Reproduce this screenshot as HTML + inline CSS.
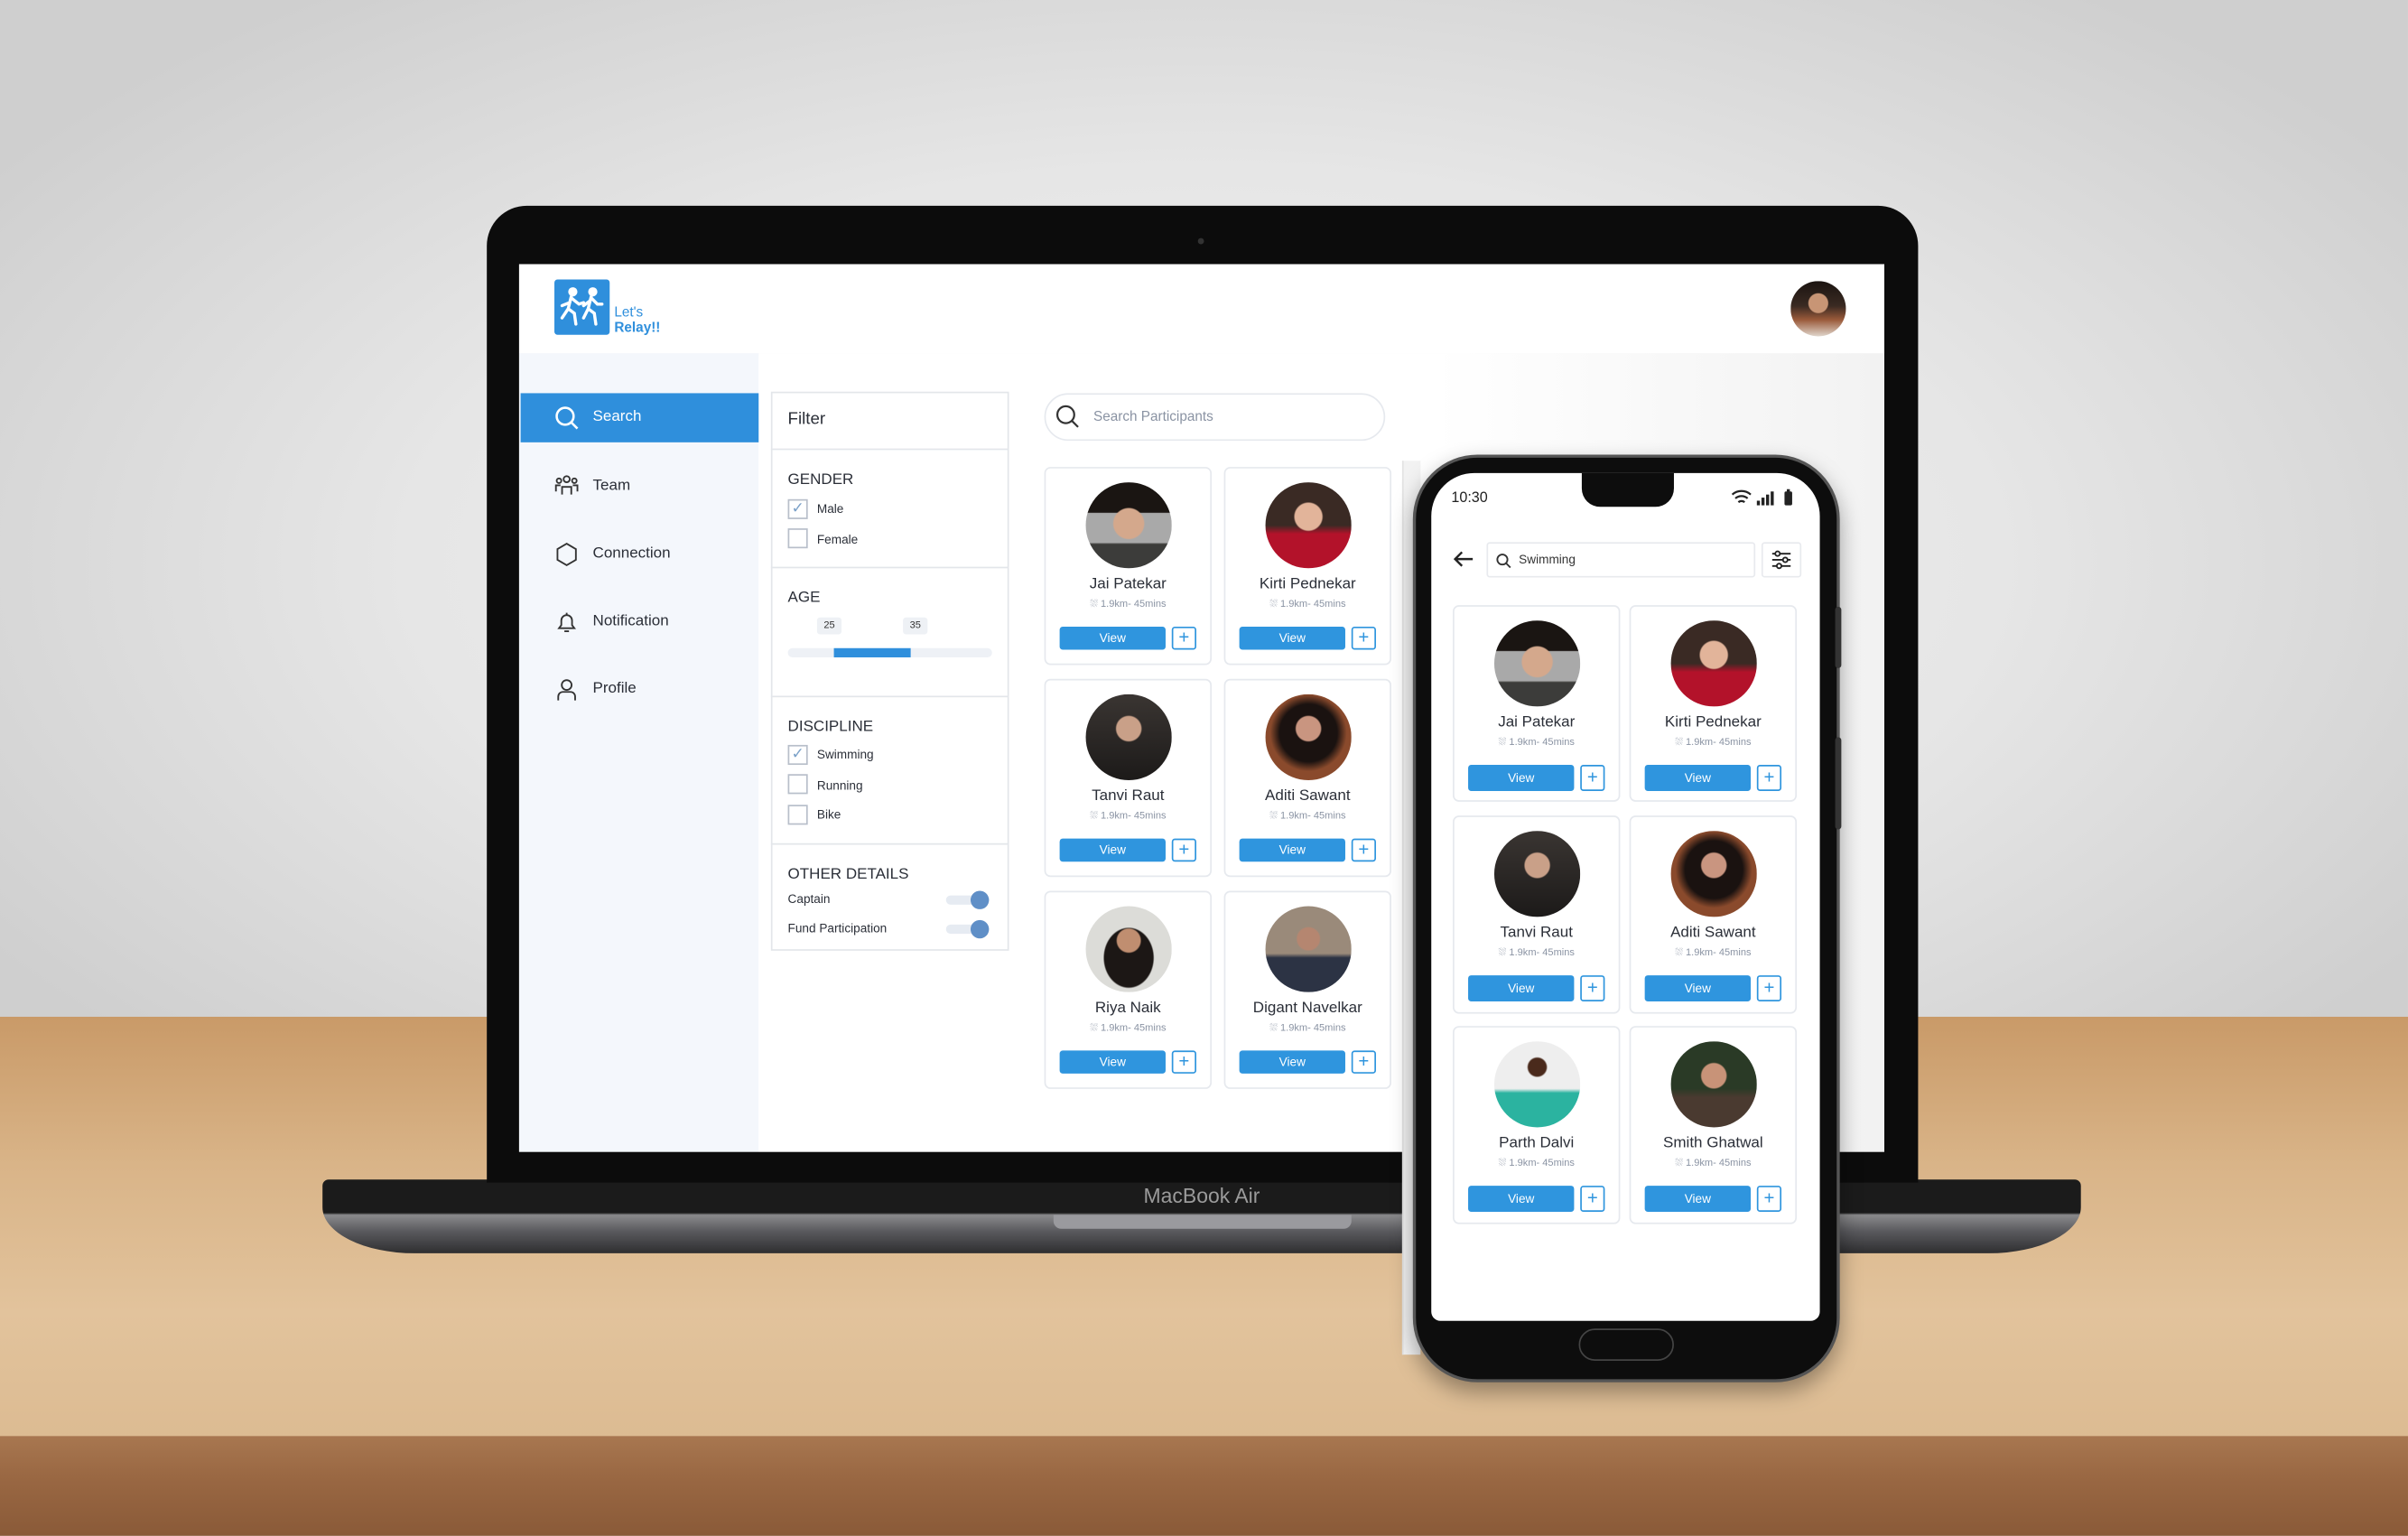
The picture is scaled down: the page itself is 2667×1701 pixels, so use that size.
<!DOCTYPE html>
<html><head><meta charset="utf-8">
<style>
*{margin:0;padding:0;box-sizing:border-box}
html,body{width:2667px;height:1701px;overflow:hidden;background:#ddd}
#s{position:absolute;left:0;top:0;width:1568px;height:1000px;transform:scale(1.70089);transform-origin:0 0;font-family:"Liberation Sans",sans-serif;overflow:hidden}
.a{position:absolute}
.wall{left:0;top:0;width:1568px;height:665px;background:radial-gradient(ellipse 60% 70% at 50% 55%,#f2f2f2 0%,#e6e6e6 55%,#cfcfcf 100%)}
.table{left:0;top:662px;width:1568px;height:275px;background:linear-gradient(180deg,#c99a68 0%,#d9b488 35%,#e2c39c 70%,#dcbb92 100%)}
.edge{left:0;top:935px;width:1568px;height:65px;background:linear-gradient(180deg,#a87750,#9a6843 40%,#8a5a38)}
.lid{left:317px;top:134px;width:932px;height:636px;background:#0c0c0c;border-radius:26px 26px 0 0}
.scr{left:338px;top:172px;width:889px;height:578px;background:#fff;overflow:hidden}
.base{left:210px;top:768px;width:1145px;height:48px;background:linear-gradient(180deg,#1b1b1b 0%,#1b1b1b 45%,#8a8a8c 48%,#5a5a5e 70%,#2e2e30 100%);border-radius:4px 4px 60px 60px/4px 4px 30px 30px}
.card{position:absolute;width:109px;height:129px;background:#fff;border:1px solid #e6e9ee;border-radius:4px}
.av{position:absolute;left:26px;top:9px;width:56px;height:56px;border-radius:50%}
.nm{position:absolute;left:0;width:100%;top:70px;text-align:center;font-size:10px;color:#2b2f38}
.ds{position:absolute;left:0;width:100%;top:85px;text-align:center;font-size:6.5px;color:#8a93a3}
.vw{position:absolute;left:9px;top:103px;width:69px;height:15px;background:#2f95de;border-radius:2px;color:#fff;font-size:8px;text-align:center;line-height:15px}
.pl{position:absolute;left:82px;top:103px;width:16px;height:15px;border:1px solid #2f95de;border-radius:2px;color:#2f95de;font-size:12px;text-align:center;line-height:13px}
.mi{position:absolute;left:386px;font-size:10px;color:#2b2f38}
.cb{position:absolute;left:513px;width:13px;height:13px;border:1px solid #b8bfca;background:#fff}
.lb{position:absolute;left:532px;font-size:8px;color:#2b2f38}
.hd{position:absolute;left:513px;font-size:10px;color:#2b2f38}
</style></head><body><div id="s">
<div class="a wall"></div>
<div class="a table"></div>
<div class="a edge"></div>

<div class="a base"></div>
<div class="a" style="left:686px;top:791px;width:194px;height:9px;background:#9a9a9e;border-radius:0 0 5px 5px"></div>
<div class="a lid"></div>
<div class="a" style="left:780px;top:155px;width:4px;height:4px;border-radius:50%;background:#333"></div>
<div class="a" style="left:318px;top:752px;width:600px;height:18px;color:#8f8f8f;font-size:13px;text-align:center;padding-left:329px;text-align:left;line-height:56px"></div>
<div class="a" style="left:700px;top:771px;width:165px;text-align:center;color:#9b9b9b;font-size:13.5px">MacBook Air</div>

<div class="a scr">
 <!-- header -->
 <div class="a" style="left:0;top:0;width:889px;height:58px;background:#fff;box-shadow:0 2px 4px rgba(0,0,0,.04)"></div>
 <div class="a" style="left:23px;top:10px;width:36px;height:36px;background:#2f8fdc;border-radius:2px">
  <svg width="36" height="36" viewBox="0 0 36 36"><g fill="none" stroke="#fff" stroke-width="2" stroke-linecap="round"><circle cx="12" cy="8" r="2" fill="#fff"/><path d="M11 11l-2 8 4 3 1 7M10 15l-5 2M11 12l5 4 3-1M9 19l-4 6"/><circle cx="25" cy="8" r="2" fill="#fff"/><path d="M24 11l-2 8 4 3 1 7M23 14l-4 3M24 12l4 4 3 0M22 19l-3 6"/></g></svg>
 </div>
 <div class="a" style="left:62px;top:26px;font-size:9px;color:#2f8fdc;line-height:10px">Let's<br><b>Relay!!</b></div>
 <div class="a" style="left:828px;top:11px;width:36px;height:36px;border-radius:50%;background:radial-gradient(circle at 50% 40%,#c89575 0 22%,transparent 24%),linear-gradient(180deg,#1b1411 0%,#3a2a22 45%,#9a5a3a 70%,#e0d6cc 100%)"></div>
 <!-- sidebar -->
 <div class="a" style="left:0;top:58px;width:156px;height:520px;background:#f4f7fc"></div>
 <div class="a" style="left:156px;top:58px;width:733px;height:520px;background:linear-gradient(90deg,#fff 60%,#f2f2f2 100%)"></div>
 <div class="a" style="left:1px;top:84px;width:155px;height:32px;background:#2f8fdc"></div>
</div>
<!-- sidebar icons & text (page coords) -->
<svg class="a" style="left:361px;top:264px" width="16" height="16" viewBox="0 0 16 16"><circle cx="7" cy="7" r="5.5" fill="none" stroke="#fff" stroke-width="1.5"/><path d="M11 11l4 4" stroke="#fff" stroke-width="1.5"/></svg>
<div class="mi" style="top:266px;color:#fff">Search</div>
<svg class="a" style="left:361px;top:309px" width="16" height="14" viewBox="0 0 16 14"><g fill="none" stroke="#333" stroke-width="1.1"><circle cx="8" cy="3" r="2"/><circle cx="3" cy="4" r="1.5"/><circle cx="13" cy="4" r="1.5"/><path d="M5 13V8h6v5M1 11V7h3M15 11V7h-3"/></g></svg>
<div class="mi" style="top:311px">Team</div>
<svg class="a" style="left:361px;top:353px" width="16" height="16" viewBox="0 0 16 16"><path d="M8 1l6 3.5v7L8 15 2 11.5v-7z" fill="none" stroke="#333" stroke-width="1.1"/></svg>
<div class="mi" style="top:355px">Connection</div>
<svg class="a" style="left:361px;top:397px" width="16" height="16" viewBox="0 0 16 16"><path d="M3 12h10l-1.5-2V7a3.5 3.5 0 00-7 0v3zM6.5 14h3M8 2v1.5" fill="none" stroke="#333" stroke-width="1.1"/></svg>
<div class="mi" style="top:399px">Notification</div>
<svg class="a" style="left:361px;top:441px" width="16" height="16" viewBox="0 0 16 16"><circle cx="8" cy="5" r="3.2" fill="none" stroke="#333" stroke-width="1.1"/><path d="M2.5 15v-2.5a3 3 0 013-3h5a3 3 0 013 3V15" fill="none" stroke="#333" stroke-width="1.1"/></svg>
<div class="mi" style="top:443px">Profile</div>

<!-- filter panel -->
<div class="a" style="left:502px;top:255px;width:155px;height:364px;background:#fff;border:1px solid #e3e6ea"></div>
<div class="a" style="left:502px;top:292px;width:155px;height:1px;background:#e3e6ea"></div>
<div class="a" style="left:502px;top:369px;width:155px;height:1px;background:#e3e6ea"></div>
<div class="a" style="left:502px;top:453px;width:155px;height:1px;background:#e3e6ea"></div>
<div class="a" style="left:502px;top:549px;width:155px;height:1px;background:#e3e6ea"></div>
<div class="hd" style="top:267px;font-size:11px">Filter</div>
<div class="hd" style="top:307px">GENDER</div>
<div class="cb" style="top:325px;color:#7aa0c8;font-size:10px;line-height:11px;text-align:center">✓</div><div class="lb" style="top:327px">Male</div>
<div class="cb" style="top:344px"></div><div class="lb" style="top:347px">Female</div>
<div class="hd" style="top:384px">AGE</div>
<div class="a" style="left:532px;top:402px;width:16px;height:11px;background:#eef1f5;border-radius:2px;font-size:6.5px;text-align:center;line-height:11px;color:#333">25</div>
<div class="a" style="left:588px;top:402px;width:16px;height:11px;background:#eef1f5;border-radius:2px;font-size:6.5px;text-align:center;line-height:11px;color:#333">35</div>
<div class="a" style="left:513px;top:422px;width:133px;height:6px;background:#eef1f6;border-radius:3px"></div>
<div class="a" style="left:543px;top:422px;width:50px;height:6px;background:#2f8fdc"></div>
<div class="hd" style="top:468px">DISCIPLINE</div>
<div class="cb" style="top:485px;color:#7aa0c8;font-size:10px;line-height:11px;text-align:center">✓</div><div class="lb" style="top:487px">Swimming</div>
<div class="cb" style="top:504px"></div><div class="lb" style="top:507px">Running</div>
<div class="cb" style="top:524px"></div><div class="lb" style="top:526px">Bike</div>
<div class="hd" style="top:564px">OTHER DETAILS</div>
<div class="lb" style="left:513px;top:581px">Captain</div>
<div class="lb" style="left:513px;top:600px">Fund Participation</div>
<div class="a" style="left:616px;top:583px;width:28px;height:6px;background:#e6ebf2;border-radius:3px"></div>
<div class="a" style="left:632px;top:580px;width:12px;height:12px;background:#5f8fc7;border-radius:50%"></div>
<div class="a" style="left:616px;top:602px;width:28px;height:6px;background:#e6ebf2;border-radius:3px"></div>
<div class="a" style="left:632px;top:599px;width:12px;height:12px;background:#5f8fc7;border-radius:50%"></div>

<!-- search -->
<div class="a" style="left:680px;top:256px;width:222px;height:31px;border:1px solid #e6e9ee;border-radius:16px;background:#fff"></div>
<svg class="a" style="left:687px;top:263px" width="16" height="16" viewBox="0 0 16 16"><circle cx="7" cy="7" r="5.5" fill="none" stroke="#333" stroke-width="1.3"/><path d="M11 11l4 4" stroke="#333" stroke-width="1.3"/></svg>
<div class="a" style="left:712px;top:266px;font-size:9px;color:#8a93a3">Search Participants</div>

<!-- laptop cards -->
<div class="card" style="left:680px;top:304px"><div class="av" style="background:radial-gradient(circle at 50% 48%,#d4a88c 0 24%,transparent 26%),linear-gradient(180deg,#1a1512 0 35%,#a9a9a9 36% 70%,#3c3c3a 72%)"></div><div class="nm">Jai Patekar</div><div class="ds">⛆ 1.9km- 45mins</div><div class="vw">View</div><div class="pl">+</div></div>
<div class="card" style="left:797px;top:304px"><div class="av" style="background:radial-gradient(circle at 50% 40%,#e2b49a 0 20%,transparent 22%),linear-gradient(180deg,#3a2a24 0 50%,#b3122a 60%)"></div><div class="nm">Kirti Pednekar</div><div class="ds">⛆ 1.9km- 45mins</div><div class="vw">View</div><div class="pl">+</div></div>
<div class="card" style="left:680px;top:442px"><div class="av" style="background:radial-gradient(circle at 50% 40%,#c9a088 0 18%,transparent 20%),linear-gradient(180deg,#3a3532,#1c1a19)"></div><div class="nm">Tanvi Raut</div><div class="ds">⛆ 1.9km- 45mins</div><div class="vw">View</div><div class="pl">+</div></div>
<div class="card" style="left:797px;top:442px"><div class="av" style="background:radial-gradient(circle at 50% 40%,#c99580 0 18%,transparent 20%),radial-gradient(circle at 50% 45%,#1a1210 0 45%,#8a4a2c 60%)"></div><div class="nm">Aditi Sawant</div><div class="ds">⛆ 1.9km- 45mins</div><div class="vw">View</div><div class="pl">+</div></div>
<div class="card" style="left:680px;top:580px"><div class="av" style="background:radial-gradient(circle at 50% 40%,#c08e70 0 17%,transparent 19%),radial-gradient(ellipse at 50% 60%,#1c1715 0 40%,#dcdcd8 42%)"></div><div class="nm">Riya Naik</div><div class="ds">⛆ 1.9km- 45mins</div><div class="vw">View</div><div class="pl">+</div></div>
<div class="card" style="left:797px;top:580px"><div class="av" style="background:radial-gradient(circle at 50% 38%,#b58670 0 16%,transparent 18%),linear-gradient(180deg,#9a8a7a 0 55%,#2c3344 60%)"></div><div class="nm">Digant Navelkar</div><div class="ds">⛆ 1.9km- 45mins</div><div class="vw">View</div><div class="pl">+</div></div>
<div class="a" style="left:913px;top:300px;width:12px;height:582px;background:#f2f2f2;border-left:1px solid #e3e3e3"></div>

<!-- phone -->
<div class="a" style="left:920px;top:296px;width:278px;height:604px;background:#0d0d0d;border-radius:42px;border:2px solid #555;box-shadow:0 6px 14px rgba(0,0,0,.35)"></div>
<div class="a" style="left:1195px;top:395px;width:4px;height:40px;background:#333;border-radius:2px"></div>
<div class="a" style="left:1195px;top:480px;width:4px;height:60px;background:#333;border-radius:2px"></div>
<div class="a" style="left:932px;top:308px;width:253px;height:552px;background:#fff;border-radius:28px 28px 6px 6px;overflow:hidden"></div>
<div class="a" style="left:1030px;top:308px;width:60px;height:22px;background:#0d0d0d;border-radius:0 0 12px 12px"></div>
<div class="a" style="left:945px;top:319px;font-size:9.5px;color:#222">10:30</div>
<svg class="a" style="left:1127px;top:318px" width="45" height="12" viewBox="0 0 45 12"><path d="M1 4a9 9 0 0112 0M3 6.5a6 6 0 018 0M5 9a3 3 0 014 0" stroke="#222" stroke-width="1.3" fill="none"/><rect x="17" y="8" width="2" height="3" fill="#222"/><rect x="20" y="6" width="2" height="5" fill="#222"/><rect x="23" y="4" width="2" height="7" fill="#222"/><rect x="26" y="2" width="2" height="9" fill="#222"/><rect x="35" y="2" width="5" height="9" rx="1" fill="#222"/><rect x="36.5" y="0.5" width="2" height="2" fill="#222"/></svg>
<svg class="a" style="left:946px;top:358px" width="14" height="12" viewBox="0 0 14 12"><path d="M13 6H2M6 1.5L1.5 6 6 10.5" stroke="#222" stroke-width="1.4" fill="none"/></svg>
<div class="a" style="left:968px;top:353px;width:175px;height:23px;border:1px solid #e8eaee;border-radius:2px"></div>
<svg class="a" style="left:974px;top:360px" width="10" height="10" viewBox="0 0 10 10"><circle cx="4.3" cy="4.3" r="3.3" fill="none" stroke="#333" stroke-width="1.1"/><path d="M6.8 6.8L9.5 9.5" stroke="#333" stroke-width="1.1"/></svg>
<div class="a" style="left:989px;top:360px;font-size:8px;color:#333">Swimming</div>
<div class="a" style="left:1147px;top:353px;width:26px;height:23px;border:1px solid #e8eaee;border-radius:2px"></div>
<svg class="a" style="left:1153px;top:358px" width="14" height="13" viewBox="0 0 14 13"><g stroke="#222" stroke-width="1.1" fill="#fff"><path d="M1 2.5h12M1 6.5h12M1 10.5h12"/><circle cx="4.5" cy="2.5" r="1.5"/><circle cx="9.5" cy="6.5" r="1.5"/><circle cx="5.5" cy="10.5" r="1.5"/></g></svg>

<div class="card" style="left:946px;top:394px;height:128px"><div class="av" style="background:radial-gradient(circle at 50% 48%,#d4a88c 0 24%,transparent 26%),linear-gradient(180deg,#1a1512 0 35%,#a9a9a9 36% 70%,#3c3c3a 72%)"></div><div class="nm">Jai Patekar</div><div class="ds">⛆ 1.9km- 45mins</div><div class="vw" style="top:103px;height:17px;line-height:17px">View</div><div class="pl" style="height:17px;line-height:15px">+</div></div>
<div class="card" style="left:1061px;top:394px;height:128px"><div class="av" style="background:radial-gradient(circle at 50% 40%,#e2b49a 0 20%,transparent 22%),linear-gradient(180deg,#3a2a24 0 50%,#b3122a 60%)"></div><div class="nm">Kirti Pednekar</div><div class="ds">⛆ 1.9km- 45mins</div><div class="vw" style="top:103px;height:17px;line-height:17px">View</div><div class="pl" style="height:17px;line-height:15px">+</div></div>
<div class="card" style="left:946px;top:531px;height:129px"><div class="av" style="background:radial-gradient(circle at 50% 40%,#c9a088 0 18%,transparent 20%),linear-gradient(180deg,#3a3532,#1c1a19)"></div><div class="nm">Tanvi Raut</div><div class="ds">⛆ 1.9km- 45mins</div><div class="vw" style="height:17px;line-height:17px">View</div><div class="pl" style="height:17px;line-height:15px">+</div></div>
<div class="card" style="left:1061px;top:531px;height:129px"><div class="av" style="background:radial-gradient(circle at 50% 40%,#c99580 0 18%,transparent 20%),radial-gradient(circle at 50% 45%,#1a1210 0 45%,#8a4a2c 60%)"></div><div class="nm">Aditi Sawant</div><div class="ds">⛆ 1.9km- 45mins</div><div class="vw" style="height:17px;line-height:17px">View</div><div class="pl" style="height:17px;line-height:15px">+</div></div>
<div class="card" style="left:946px;top:668px;height:129px"><div class="av" style="background:radial-gradient(circle at 50% 30%,#4a2a1c 0 12%,transparent 14%),linear-gradient(180deg,#eeeeee 0 55%,#2bb3a0 60%)"></div><div class="nm">Parth Dalvi</div><div class="ds">⛆ 1.9km- 45mins</div><div class="vw" style="height:17px;line-height:17px">View</div><div class="pl" style="height:17px;line-height:15px">+</div></div>
<div class="card" style="left:1061px;top:668px;height:129px"><div class="av" style="background:radial-gradient(circle at 50% 40%,#c89378 0 18%,transparent 20%),linear-gradient(180deg,#2a3a26 0 55%,#4a3a30 65%)"></div><div class="nm">Smith Ghatwal</div><div class="ds">⛆ 1.9km- 45mins</div><div class="vw" style="height:17px;line-height:17px">View</div><div class="pl" style="height:17px;line-height:15px">+</div></div>

<div class="a" style="left:1028px;top:865px;width:62px;height:21px;border:1.5px solid #444;border-radius:11px"></div>
</div></body></html>
